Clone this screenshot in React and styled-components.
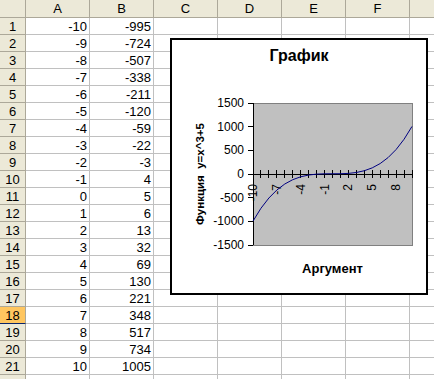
import React from "react";
import styled, { createGlobalStyle } from "styled-components";

const GlobalStyle = createGlobalStyle`
  html, body {
    margin: 0;
    padding: 0;
    background: #fff;
    overflow: hidden;
  }
  body {
    font-family: "Liberation Sans", Arial, sans-serif;
  }
`;

const Page = styled.div`
  position: relative;
  width: 434px;
  height: 379px;
  overflow: hidden;
`;

const Sheet = styled.div`
  display: grid;
  grid-template-columns: 26px repeat(7, 64px);
  grid-template-rows: 18px;
  grid-auto-rows: 17px;
  font-size: 12px;
  color: #000;
`;

const HeadCell = styled.div`
  box-sizing: border-box;
  background: ${(p) => (p.$active ? "#ffc660" : "#ece9d8")};
  border-right: 1px solid #aca899;
  border-bottom: 1px solid ${(p) => (p.$active ? "#0a246a" : "#aca899")};
  display: flex;
  align-items: center;
  justify-content: center;
  font-size: 13px;
`;

const Cell = styled.div`
  box-sizing: border-box;
  border-right: 1px solid #c0c0c0;
  border-bottom: 1px solid #c0c0c0;
  display: flex;
  align-items: center;
  justify-content: flex-end;
  padding-right: 2px;
  font-size: 13px;
  white-space: nowrap;
`;

const ChartFrame = styled.div`
  position: absolute;
  left: 170px;
  top: 38px;
  width: 258px;
  height: 257px;
  box-sizing: border-box;
  border: 2px solid #000;
  background: #fff;
  display: flex;
  flex-direction: column;
`;

const ChartTitle = styled.div`
  padding-top: 7px;
  height: 18px;
  line-height: 18px;
  text-align: center;
  font-size: 16px;
  font-weight: bold;
`;

const Plot = styled.svg`
  display: block;
  font-family: "Liberation Sans", Arial, sans-serif;
  .lbl {
    font-size: 12px;
    fill: #000;
  }
  .axt {
    font-size: 13px;
    font-weight: bold;
    fill: #000;
    white-space: pre;
  }
  .axt.side {
    font-size: 11.5px;
  }
`;

const COLS = ["A", "B", "C", "D", "E", "F", "G"];
const xs = Array.from({ length: 21 }, (_, i) => i - 10);
const f = (x) => x * x * x + 5;

const PX0 = 253;
const PX1 = 412;
const PY0 = 103;
const PY1 = 245;
const Y0 = 174;
const yOf = (v) => Y0 - (v * (PY1 - PY0)) / 3000;
const xOf = (i) => PX0 + (i * (PX1 - PX0)) / 20;

function Chart() {
  const yTicks = [1500, 1000, 500, 0, -500, -1000, -1500];
  const points = xs.map((x, i) => `${xOf(i).toFixed(2)},${yOf(f(x)).toFixed(2)}`).join(" ");
  return (
    <ChartFrame>
      <ChartTitle>График</ChartTitle>
      <Plot width="254" height="228" viewBox="172 65 254 228">
        <rect x={PX0} y={PY0} width={PX1 - PX0} height={PY1 - PY0} fill="#c0c0c0" stroke="#808080" strokeWidth="1" shapeRendering="crispEdges" />
        <line x1={PX0} y1={PY0} x2={PX0} y2={PY1} stroke="#000" shapeRendering="crispEdges" />
        {yTicks.map((v) => (
          <g key={v}>
            <line x1={PX0 - 5} y1={yOf(v)} x2={PX0} y2={yOf(v)} stroke="#000" shapeRendering="crispEdges" />
            <text className="lbl" x="244" y={yOf(v) + 4} textAnchor="end">
              {v}
            </text>
          </g>
        ))}
        <line x1={PX0} y1={Y0} x2={PX1} y2={Y0} stroke="#000" shapeRendering="crispEdges" />
        {xs.map((x, i) => (
          <line key={x} x1={xOf(i)} y1={Y0 - 4} x2={xOf(i)} y2={Y0 + 4} stroke="#000" shapeRendering="crispEdges" />
        ))}
        {xs.map((x, i) =>
          i % 3 === 0 ? (
            <text
              key={x}
              className="lbl"
              x={xOf(i)}
              y="184"
              textAnchor="end"
              dominantBaseline="central"
              transform={`rotate(-90 ${xOf(i)} 184)`}
            >
              {x}
            </text>
          ) : null
        )}
        <polyline points={points} fill="none" stroke="#000080" strokeWidth="1" />
        <text className="axt side" x="200" y="174" textAnchor="middle" dominantBaseline="central" transform="rotate(-90 200 174)">
          {"Функция  y=x^3+5"}
        </text>
        <text className="axt" x="332.5" y="272.5" textAnchor="middle">
          Аргумент
        </text>
      </Plot>
    </ChartFrame>
  );
}

export default function App() {
  const rows = Array.from({ length: 22 }, (_, i) => i + 1);
  return (
    <Page>
      <GlobalStyle />
      <Sheet>
        <HeadCell />
        {COLS.map((c) => (
          <HeadCell key={c}>{c}</HeadCell>
        ))}
        {rows.map((r) => {
          const x = r - 11;
          const has = r <= 21;
          return (
            <React.Fragment key={r}>
              <HeadCell $active={r === 18}>{r}</HeadCell>
              <Cell>{has ? x : ""}</Cell>
              <Cell>{has ? f(x) : ""}</Cell>
              {COLS.slice(2).map((c) => (
                <Cell key={c} />
              ))}
            </React.Fragment>
          );
        })}
      </Sheet>
      <Chart />
    </Page>
  );
}
